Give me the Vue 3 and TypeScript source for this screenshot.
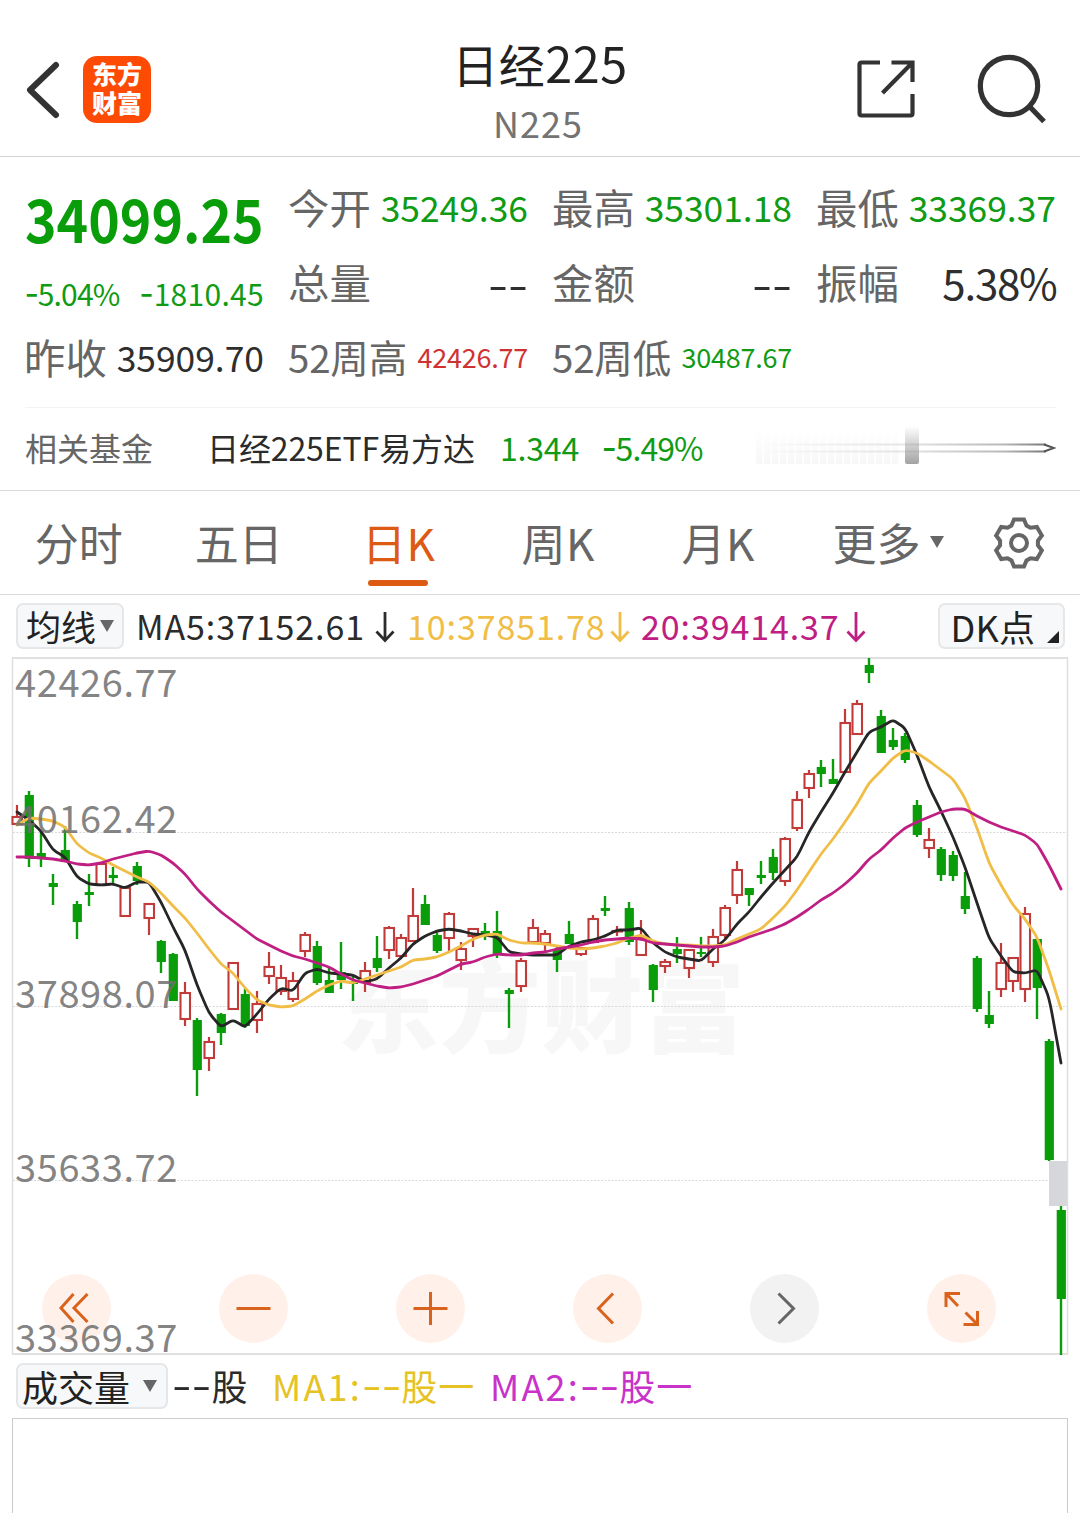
<script setup lang="ts">
interface Quote {
  label: string
  value: string
  kind: 'price' | 'dash' | 'big' | 'small'
  tone: 'down' | 'up' | 'flat'
}

const columns: Quote[][] = [
  [
    { label: '今开', value: '35249.36', kind: 'price', tone: 'down' },
    { label: '总量', value: '--', kind: 'dash', tone: 'flat' },
    { label: '52周高', value: '42426.77', kind: 'small', tone: 'up' },
  ],
  [
    { label: '最高', value: '35301.18', kind: 'price', tone: 'down' },
    { label: '金额', value: '--', kind: 'dash', tone: 'flat' },
    { label: '52周低', value: '30487.67', kind: 'small', tone: 'down' },
  ],
  [
    { label: '最低', value: '33369.37', kind: 'price', tone: 'down' },
    { label: '振幅', value: '5.38%', kind: 'big', tone: 'flat' },
  ],
]

const tabs = [
  { text: '分时', cls: 'first' },
  { text: '五日', cls: 'second' },
  { text: '日K', cls: 'k active' },
  { text: '周K', cls: 'k' },
  { text: '月K', cls: 'k month' },
]

const averages = [
  { text: 'MA5:37152.61', cls: 'ma5' },
  { text: '10:37851.78', cls: 'ma10' },
  { text: '20:39414.37', cls: 'ma20' },
]

// [direction, high, body top, body bottom, low] per trading day, in chart units
type Candle = [0 | 1, number, number, number, number]
const candles: Candle[] = [
  [1, 805, 816, 824, 824], [0, 791, 795, 859, 867], [0, 832, 853, 857, 867], [0, 874, 883, 887, 905],
  [0, 826, 850, 862, 862], [0, 901, 904, 922, 939], [0, 874, 892, 895, 906], [1, 863, 863, 885, 885],
  [0, 867, 875, 878, 884], [1, 887, 887, 916, 917], [0, 862, 866, 881, 885], [1, 903, 903, 918, 935],
  [0, 940, 941, 962, 973], [0, 953, 954, 1001, 1001], [1, 982, 992, 1019, 1026], [0, 1018, 1020, 1070, 1096],
  [1, 1037, 1041, 1058, 1071], [0, 1013, 1014, 1033, 1045], [1, 962, 962, 1009, 1009], [0, 989, 994, 1026, 1028],
  [1, 991, 1003, 1020, 1033], [1, 952, 966, 976, 984], [1, 965, 977, 991, 995], [1, 972, 980, 999, 1002],
  [1, 932, 934, 951, 957], [0, 941, 946, 983, 985], [0, 968, 980, 993, 993], [0, 942, 972, 980, 989],
  [0, 975, 981, 984, 1001], [1, 962, 970, 982, 992], [0, 936, 958, 968, 972], [1, 926, 927, 950, 959],
  [1, 934, 937, 956, 957], [1, 888, 915, 941, 941], [0, 895, 904, 925, 925], [0, 933, 935, 951, 953],
  [1, 912, 913, 938, 951], [1, 942, 948, 960, 970], [1, 928, 928, 936, 947], [0, 923, 931, 936, 940],
  [0, 911, 931, 954, 958], [0, 988, 990, 994, 1028], [1, 958, 960, 986, 992], [1, 919, 927, 942, 942],
  [1, 930, 933, 943, 952], [0, 946, 949, 960, 972], [0, 921, 934, 944, 944], [1, 947, 947, 954, 956],
  [1, 915, 918, 942, 942], [0, 896, 908, 911, 916], [1, 926, 930, 931, 936], [0, 902, 908, 942, 945],
  [1, 920, 937, 955, 956], [0, 964, 965, 990, 1002], [1, 959, 961, 966, 973], [0, 937, 949, 954, 963],
  [1, 949, 949, 968, 978], [0, 937, 952, 954, 957], [1, 929, 936, 962, 967], [1, 905, 907, 935, 940],
  [1, 861, 869, 895, 904], [0, 888, 888, 895, 906], [0, 861, 875, 878, 884], [0, 849, 857, 873, 880],
  [1, 837, 838, 881, 886], [1, 791, 799, 828, 831], [1, 770, 773, 788, 798], [0, 760, 767, 774, 787],
  [0, 759, 779, 784, 784], [1, 709, 722, 772, 772], [1, 700, 703, 734, 734], [0, 658, 665, 673, 683],
  [0, 710, 716, 753, 753], [0, 728, 740, 747, 750], [0, 733, 736, 760, 763], [0, 800, 805, 835, 837],
  [1, 828, 839, 848, 858], [0, 847, 849, 875, 881], [0, 851, 855, 876, 881], [0, 872, 896, 909, 914],
  [0, 956, 958, 1009, 1012], [0, 991, 1015, 1024, 1028], [1, 943, 962, 989, 997], [1, 957, 957, 981, 992],
  [1, 907, 913, 989, 1002], [0, 938, 939, 988, 1019], [0, 1039, 1041, 1160, 1161], [0, 1206, 1210, 1299, 1355],
]

const ma5 = [
  812, 820, 831, 850, 857, 877, 884, 885, 884, 888, 882, 882, 902, 927, 950, 985, 1013, 1027, 1020, 1027, 1014, 999,
  988, 991, 973, 969, 973, 974, 975, 982, 979, 968, 958, 944, 936, 931, 929, 931, 934, 935, 937, 952, 954, 955,
  955, 955, 946, 942, 940, 936, 930, 930, 928, 943, 952, 957, 959, 961, 949, 940, 924, 912, 897, 883, 870, 857,
  832, 812, 793, 772, 752, 732, 727, 720, 728, 755, 787, 811, 837, 867, 903, 938, 956, 972, 973, 970, 997, 1063,
]
const ma10 = [
  825, 818, 819, 821, 827, 844, 853, 858, 865, 871, 877, 882, 893, 906, 918, 933, 949, 964, 973, 988, 1000, 1005,
  1007, 1006, 999, 991, 985, 981, 983, 979, 975, 971, 967, 960, 959, 957, 952, 946, 939, 935, 934, 940, 943, 943,
  944, 946, 948, 949, 948, 946, 943, 938, 935, 941, 944, 945, 945, 946, 946, 945, 939, 934, 929, 918, 906, 890,
  872, 854, 839, 822, 804, 783, 771, 758, 750, 753, 761, 770, 779, 798, 828, 863, 885, 905, 919, 937, 970, 1009,
]
const ma20 = [
  857, 857, 858, 859, 861, 864, 865, 863, 859, 856, 853, 851, 855, 863, 874, 889, 901, 912, 921, 930, 939, 945,
  951, 956, 959, 963, 967, 974, 980, 983, 986, 988, 987, 984, 980, 976, 970, 964, 962, 957, 954, 955, 955, 953,
  952, 949, 947, 945, 942, 940, 939, 938, 939, 943, 944, 945, 946, 947, 947, 946, 942, 937, 933, 929, 924, 917,
  909, 900, 893, 884, 873, 859, 850, 838, 828, 822, 817, 812, 809, 809, 816, 822, 827, 831, 835, 844, 865, 889,
]

const xOf = (i: number) => 17 + 12 * i

// Round off each vertex of a moving average a little
function smooth(values: number[]): string {
  let d = `M${xOf(0)} ${values[0]}`
  for (let i = 1; i < values.length - 1; i++) {
    const x = xOf(i)
    const y = values[i]
    const py = y + (values[i - 1] - y) / 4
    const ny = y + (values[i + 1] - y) / 4
    d += `L${x - 3} ${py}Q${x} ${y} ${x + 3} ${ny}`
  }
  return `${d}L${xOf(values.length - 1)} ${values[values.length - 1]}`
}

const lines = [
  { d: smooth(ma5), color: '#262626' },
  { d: smooth(ma10), color: '#f0bd47' },
  { d: smooth(ma20), color: '#bf1e82' },
]

const axis = [
  { y: 697, text: '42426.77' },
  { y: 833, text: '40162.42' },
  { y: 1008, text: '37898.07' },
  { y: 1182, text: '35633.72' },
  { y: 1352, text: '33369.37' },
]

const controls = [
  { name: 'first', d: 'M31.5 20 19 34l12.5 14M45.5 20 32 34l13.5 14', muted: false },
  { name: 'zoom-out', d: 'M17.5 34.5h34', muted: false },
  { name: 'zoom-in', d: 'M17.5 34.5h34M34.5 18v33', muted: false },
  { name: 'previous', d: 'M40 19.5 25.5 34.5l14.5 15', muted: false },
  { name: 'next', d: 'M28.5 19.5 43.5 34.5l-15 15', muted: true },
  { name: 'expand', d: 'M19 33V19.5h14M19.5 20 31 32M50.5 37v13.5h-14M50 50 38.5 38.5', muted: false },
]

const gear = Array.from({ length: 6 }, (_, k) => {
  const a = (k * Math.PI) / 3
  return [[-7.5, -17.5], [-5, -23.5], [5, -23.5], [7.5, -17.5]]
    .map(([x, y]) => `${(x * Math.cos(a) - y * Math.sin(a)).toFixed(2)},${(x * Math.sin(a) + y * Math.cos(a)).toFixed(2)}`)
    .join(' ')
}).join(' ')
</script>

<template>
  <main class="page">
    <header class="top">
      <div class="side left">
        <svg class="back" width="40" height="64" viewBox="0 0 40 64">
          <path d="M34 8 8 33l26 25" fill="none" stroke="#333" stroke-width="6" stroke-linecap="round" stroke-linejoin="round" />
        </svg>
        <div class="logo"><span>东方</span><span>财富</span></div>
      </div>
      <div class="heading">
        <h1>日经<span>225</span></h1>
        <p>N225</p>
      </div>
      <div class="side right">
        <svg width="60" height="60" viewBox="0 0 60 60" fill="none" stroke="#333" stroke-width="4.2">
          <path d="M25 4.5H6.5q-2 0-2 2v49q0 2 2 2h49q2 0 2-2V36M36.5 4.5h21V24M57 5 27.5 35" />
        </svg>
        <svg width="72" height="72" viewBox="0 0 72 72" fill="none" stroke="#333" stroke-width="5.2">
          <circle cx="34" cy="33" r="28.7" />
          <path d="M55 54 69 68.5" />
        </svg>
      </div>
    </header>

    <section class="quote">
      <div class="quote-grid">
        <div class="col main">
          <div class="last"><span>34099.25</span></div>
          <div class="change">
            <span class="pct"><i class="minus">-</i>5.04%</span>
            <span class="diff"><i class="minus">-</i>1810.45</span>
          </div>
          <div class="cell"><span class="label">昨收</span><span class="value price flat">35909.70</span></div>
        </div>
        <div v-for="(col, c) in columns" :key="c" class="col">
          <div v-for="q in col" :key="q.label" class="cell">
            <span class="label" :class="{ tight: q.kind === 'small' }">{{ q.label }}</span>
            <span class="value" :class="[q.kind, q.tone]">{{ q.value }}</span>
          </div>
        </div>
      </div>
      <div class="fund">
        <span class="fund-label">相关基金</span>
        <span class="fund-name">日经225ETF易方达</span>
        <span class="fund-price">1.344</span>
        <span class="fund-pct"><i class="minus">-</i>5.49%</span>
        <svg class="spark" width="302" height="40" viewBox="0 0 302 40">
          <defs>
            <linearGradient id="bar" x1="0" y1="0" x2="0" y2="1">
              <stop offset="0" stop-color="#999" stop-opacity="0" />
              <stop offset="1" stop-color="#999" stop-opacity=".9" />
            </linearGradient>
            <linearGradient id="trail" x1="0" y1="0" x2="1" y2="0">
              <stop offset="0" stop-color="#888" stop-opacity="0" />
              <stop offset=".5" stop-color="#888" stop-opacity=".2" />
              <stop offset=".85" stop-color="#888" stop-opacity=".6" />
              <stop offset="1" stop-color="#777" />
            </linearGradient>
            <linearGradient id="haze" x1="0" y1="0" x2="0" y2="1">
              <stop offset="0" stop-color="#f0f0f0" stop-opacity="0" />
              <stop offset="1" stop-color="#f0f0f0" stop-opacity=".5" />
            </linearGradient>
          </defs>
          <rect v-for="n in 18" :key="n" :x="n * 8 - 6" y="2" width="6.5" height="36" fill="url(#haze)" />
          <rect x="4" y="17.5" width="288" height="2" fill="url(#trail)" />
          <rect x="4" y="24.5" width="288" height="2" fill="url(#trail)" />
          <rect x="151" y="0" width="14" height="38" rx="2" fill="url(#bar)" />
          <path d="m290 18.5 10 3.5-10 3.5" fill="none" stroke="#555" stroke-width="2" />
        </svg>
      </div>
    </section>

    <nav class="tabs">
      <span v-for="t in tabs" :key="t.text" class="tab" :class="t.cls">{{ t.text }}</span>
      <span class="tab more">更多<i class="caret" /></span>
      <svg class="gear" width="56" height="56" viewBox="-28 -28 56 56" fill="none" stroke="#666" stroke-width="4">
        <polygon :points="gear" />
        <circle r="8" />
      </svg>
    </nav>

    <section class="ma-row">
      <button class="chip lines">均线<i class="caret" /></button>
      <span v-for="m in averages" :key="m.cls" class="ma" :class="m.cls">
        <span>{{ m.text }}</span>
        <svg width="20" height="32" viewBox="0 0 20 32" fill="none" stroke="currentColor" stroke-width="2.8">
          <path d="M10 1v28M1.5 20.5 10 29.5l8.5-9" />
        </svg>
      </span>
      <button class="chip dk">DK点<i class="corner" /></button>
    </section>

    <section class="chart">
      <svg width="1080" height="705" viewBox="0 655 1080 705">
        <g class="watermark"><text x="337" y="1045" textLength="408">东方财富</text></g>
        <g stroke="#d9d9d9" stroke-width="1.2" stroke-dasharray="2 1.5">
          <path d="M13 832.5H1067M13 1006.5H1067M13 1180.5H1067" />
        </g>
        <path d="M12.5 658V1354M1067.5 658V1354" stroke="#dedede" stroke-width="1.5" />
        <path d="M12 658H1068M12 1354H1068" stroke="#e0e0e0" stroke-width="2" />
        <g v-for="(k, i) in candles" :key="i">
          <template v-if="k[0]">
            <path :d="`M${xOf(i)} ${k[1]}V${k[2]}M${xOf(i)} ${k[3]}V${k[4]}`" stroke="#c23b3b" stroke-width="2.2" />
            <rect :x="xOf(i) - 4.5" :y="k[2] + 1" width="9.5" :height="Math.max(k[3] - k[2] - 1, 0.5)" fill="#fff" stroke="#c23b3b" stroke-width="2.1" />
          </template>
          <template v-else>
            <path :d="`M${xOf(i)} ${k[1]}V${k[4]}`" stroke="#0a9d0a" stroke-width="2.4" />
            <rect :x="xOf(i) - 4.3" :y="k[2]" width="9.2" :height="k[3] - k[2]" fill="#0a9d0a" />
          </template>
        </g>
        <rect x="1049" y="1161" width="18" height="45" fill="#d5d7db" />
        <path v-for="l in lines" :key="l.color" :d="l.d" fill="none" :stroke="l.color" stroke-width="2.8" stroke-linecap="round" />
      </svg>
      <div class="controls">
        <span v-for="c in controls" :key="c.name" class="control" :class="{ muted: c.muted }">
          <svg width="69" height="69" viewBox="0 0 69 69" fill="none" stroke="currentColor" stroke-width="3"><path :d="c.d" /></svg>
        </span>
      </div>
      <svg class="axis" width="1080" height="705" viewBox="0 655 1080 705">
        <text v-for="a in axis" :key="a.text" x="15" :y="a.y">{{ a.text }}</text>
      </svg>
    </section>

    <section class="vol-row">
      <button class="chip vol">成交量<i class="caret" /></button>
      <span class="v0"><i class="dashes">--</i>股</span>
      <span class="v1"><b>MA1:</b><i class="dashes">--</i>股一</span>
      <span class="v2"><b>MA2:</b><i class="dashes">--</i>股一</span>
    </section>
    <div class="vol-box" />
  </main>
</template>

<style>
body {
  margin: 0;
  background: #fff;
}
</style>

<style scoped>
.page {
  width: 1080px;
  height: 1513px;
  overflow: hidden;
  display: flex;
  flex-direction: column;
  background: #fff;
  color: #2b2b2b;
  font-family: "Noto Sans CJK SC", "Noto Sans", sans-serif;
  white-space: nowrap;
}
.page > * {
  flex-shrink: 0;
  box-sizing: border-box;
}
i {
  font-style: normal;
}

.top {
  height: 157px;
  border-bottom: 1px solid #d2d2d2;
  display: grid;
  grid-template-columns: 300px 1fr 300px;
}
.side {
  display: flex;
  align-items: flex-start;
}
.left {
  padding-left: 22px;
}
.back {
  margin-top: 57px;
}
.logo {
  margin: 56px 0 0 21px;
  width: 68px;
  height: 67px;
  border-radius: 14px;
  background: #fd4a05;
  color: #fff;
  display: flex;
  flex-direction: column;
  align-items: center;
  font-size: 25px;
  font-weight: 900;
  line-height: 29px;
  padding-top: 3px;
  box-sizing: border-box;
}
.heading {
  text-align: center;
  padding-top: 31px;
}
h1 {
  margin: 0;
  font-size: 46px;
  font-weight: 400;
  line-height: 63px;
  padding-bottom: 1px;
  letter-spacing: 0.5px;
  color: #222;
}
h1 span {
  font-size: 48.5px;
}
p {
  margin: 0;
  font-size: 36px;
  line-height: 53px;
  color: #737373;
  letter-spacing: 1px;
  padding-right: 4px;
}
.right {
  justify-content: flex-end;
  padding-right: 33px;
  gap: 60px;
}
.right svg:first-child {
  margin-top: 58px;
}
.right svg:last-child {
  margin-top: 53px;
}

.quote {
  height: 334px;
  padding: 12px 24px 0 25px;
  border-bottom: 1px solid #d9d9d9;
}
.quote-grid {
  display: grid;
  grid-template-columns: repeat(4, 239px);
  column-gap: 25px;
  height: 239px;
  box-sizing: border-box;
  border-bottom: 1px solid #f3f3f3;
}
.cell {
  height: 75px;
  display: flex;
  align-items: center;
  justify-content: space-between;
}
.label {
  font-size: 41.4px;
  line-height: 60px;
  margin: -1px 0 1px -1px;
  color: #666;
}
.label.tight {
  font-size: 38.5px;
  letter-spacing: -0.2px;
}
.value {
  line-height: 60px;
}
.price {
  font-size: 35.4px;
}
.big {
  font-size: 42px;
  letter-spacing: -1.2px;
  margin-right: -0.6px;
}
.small {
  font-size: 27px;
  letter-spacing: -0.25px;
}
.dash {
  font-size: 60px;
  font-weight: 300;
  margin-top: -6px;
}
.down {
  color: #0f9b14;
}
.up {
  color: #d03232;
}
.flat {
  color: #2e2e2e;
}
.last {
  height: 93px;
  line-height: 96px;
  font-size: 59.5px;
  font-weight: 700;
  color: #0a9d0a;
}
.last span {
  display: inline-block;
  transform: scaleX(0.9);
  transform-origin: 0 50%;
}
.change {
  height: 57px;
  line-height: 63px;
  font-size: 30px;
  color: #0f9b14;
  display: flex;
  justify-content: space-between;
}
.pct {
  letter-spacing: -0.8px;
}
.diff {
  letter-spacing: 0.3px;
}
.minus {
  font-size: 1.3em;
  line-height: 0;
}
.fund {
  height: 82px;
  display: flex;
  align-items: center;
  line-height: 78px;
  font-size: 32px;
}
.fund > span {
  height: 82px;
}
.fund-label {
  width: 182px;
  color: #666;
}
.fund-name {
  width: 293px;
  letter-spacing: -0.1px;
}
.fund-price {
  width: 102px;
  letter-spacing: -0.2px;
  color: #0f9b14;
}
.fund-pct {
  width: 152px;
  letter-spacing: -0.9px;
  color: #0f9b14;
}
.spark {
  margin-top: -6px;
}

.tabs {
  height: 104px;
  border-bottom: 1px solid #d9d9d9;
  display: flex;
  font-size: 44px;
  line-height: 102px;
  color: #666;
}
.tab {
  width: 161.5px;
  text-align: center;
  position: relative;
  left: -2px;
}
.second {
  left: -3.5px;
}
.k {
  left: -7px;
  letter-spacing: 0.5px;
}
.month {
  left: -8.5px;
}
.active {
  left: -5px;
  color: #dc5a12;
}
.active::after {
  content: "";
  position: absolute;
  left: 50px;
  top: 89px;
  width: 60px;
  height: 6px;
  border-radius: 3px;
  background: #dc5a12;
}
.more {
  width: 183px;
  text-align: left;
  padding-left: 27px;
  box-sizing: border-box;
}
.gear {
  margin: 24px 0 0;
}
.caret {
  display: inline-block;
  border: solid transparent;
  border-width: 12px 7.5px 0;
  border-top-color: #666;
}
.more .caret {
  margin-left: 9px;
  vertical-align: 13px;
}

.ma-row {
  height: 60px;
  padding: 8px 15.5px 0 16px;
  display: flex;
}
.chip {
  box-sizing: border-box;
  height: 46px;
  padding: 0;
  border: 2px solid #e6e7e9;
  border-radius: 7px;
  background: #f7f8fa;
  font: inherit;
  font-size: 35px;
  line-height: 42px;
  color: #222;
  text-align: left;
  display: flex;
  align-items: center;
}
.lines {
  width: 108px;
  padding-left: 8px;
  margin-right: 12px;
}
.lines .caret {
  margin: 0 0 0 4px;
}
.ma {
  display: flex;
  font-size: 34px;
  line-height: 45px;
}
.ma span {
  flex: 1;
  letter-spacing: 0.9px;
}
.ma svg {
  margin-top: 8px;
}
.ma5 {
  width: 259px;
  margin-right: 12px;
}
.ma10 {
  width: 223px;
  margin-right: 11px;
  color: #f0bd47;
}
.ma20 {
  width: 225px;
  color: #bf1e82;
}
.dk {
  width: 127px;
  margin-left: auto;
  padding-left: 11px;
  position: relative;
  font-size: 36px;
  letter-spacing: 0.3px;
  line-height: 40px;
}
.corner {
  position: absolute;
  right: 4px;
  bottom: 4px;
  width: 0;
  height: 0;
  border-top: 12px solid transparent;
  border-right: 12px solid #222;
}

.chart {
  height: 705px;
  position: relative;
}
.chart > svg {
  display: block;
}
.watermark {
  font-size: 102px;
  font-weight: 900;
  fill: #f7f7f7;
}
.axis {
  position: absolute;
  inset: 0;
  font-size: 38px;
  letter-spacing: 0.6px;
  fill: rgba(110, 110, 110, 0.85);
}
.controls {
  position: absolute;
  left: 42px;
  top: 619px;
  display: flex;
  gap: 108px;
}
.control {
  width: 69px;
  height: 69px;
  border-radius: 50%;
  background: #fff1e9;
  color: #d9621c;
}
.muted {
  background: #f2f2f2;
  color: #666;
}

.vol-row {
  height: 58px;
  padding: 3px 16px 0;
  display: flex;
  font-size: 36px;
  line-height: 44px;
}
.vol {
  width: 152px;
  padding-left: 4px;
  margin-right: 4px;
  font-size: 36px;
}
.vol .caret {
  margin-left: 13px;
}
.dashes {
  font-size: 58px;
  font-weight: 300;
  line-height: 0;
  vertical-align: -4px;
  letter-spacing: 0.4px;
}
.vol-row b {
  font-weight: 400;
  letter-spacing: 2.2px;
}
.v0 {
  width: 100px;
}
.v1 {
  width: 218px;
  letter-spacing: 1px;
  color: #e6c223;
}
.v2 {
  letter-spacing: 1px;
  color: #c832c8;
}
.vol-box {
  margin: 0 12px;
  height: 110px;
  border: 1.5px solid #ccc;
  border-bottom: 0;
}
</style>
